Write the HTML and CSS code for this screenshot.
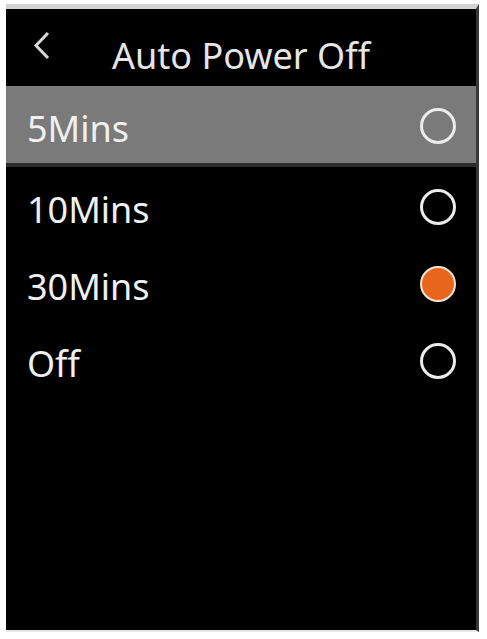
FILE: index.html
```html
<!DOCTYPE html>
<html lang="en">
<head>
  <meta charset="UTF-8">
  <title>Auto Power Off</title>
  <link rel="stylesheet" href="styles.css">
</head>
<body>

  <div class="screen">
    <div class="header">
      <div class="back">
        <svg width="18" height="30" viewBox="0 0 18 30">
          <polyline points="15,2 3,14.5 15,27" fill="none" stroke="#d8d8d8" stroke-width="3"/>
        </svg>
      </div>
      <h1 class="title">Auto Power Off</h1>
      <div></div>
    </div>

    <ul class="options">
      <li class="option active">
        <span>5Mins</span>
        <span class="radio"></span>
      </li>
      <li class="option">
        <span>10Mins</span>
        <span class="radio"></span>
      </li>
      <li class="option">
        <span>30Mins</span>
        <span class="radio checked"></span>
      </li>
      <li class="option">
        <span>Off</span>
        <span class="radio"></span>
      </li>
    </ul>
  </div>

</body>
</html>
```

FILE: styles.css
```css
body {
  margin: 0;
  background: #fff;
  font-family: "Noto Sans", "Open Sans", sans-serif;
}

.screen {
  margin: 4px 8px 0 6px;
  height: 621px;
  background: #000;
  border-top: 5px solid #d2d2d2;
  border-right: 3px solid #383838;
  border-bottom: 2px solid #e6e6e6;
  color: #f0f0f0;
}

.header {
  display: grid;
  grid-template-columns: 1fr auto 1fr;
  height: 77px;
  box-sizing: border-box;
  padding-top: 16px;
}

.back {
  padding-left: 27px;
  margin-top: 6px;
}

.title {
  margin: 0;
  font-size: 36px;
  font-weight: normal;
  line-height: 61px;
  color: #e6e6e6;
}

.options {
  list-style: none;
  margin: 0;
  padding: 0;
}

.option {
  display: flex;
  align-items: center;
  justify-content: space-between;
  height: 77px;
  box-sizing: border-box;
  padding: 9px 20px 0 21px;
  font-size: 36px;
  line-height: 68px;
}

.option.active {
  height: 81px;
  background: #7a7a7a;
  border-bottom: 4px solid #2c2c2c;
}

.radio {
  width: 36px;
  height: 36px;
  box-sizing: border-box;
  border: 3px solid #ececec;
  border-radius: 50%;
  margin-top: -6px;
}

.radio.checked {
  border: 2px solid #f4e4d8;
  background: #e8661c;
}
```
